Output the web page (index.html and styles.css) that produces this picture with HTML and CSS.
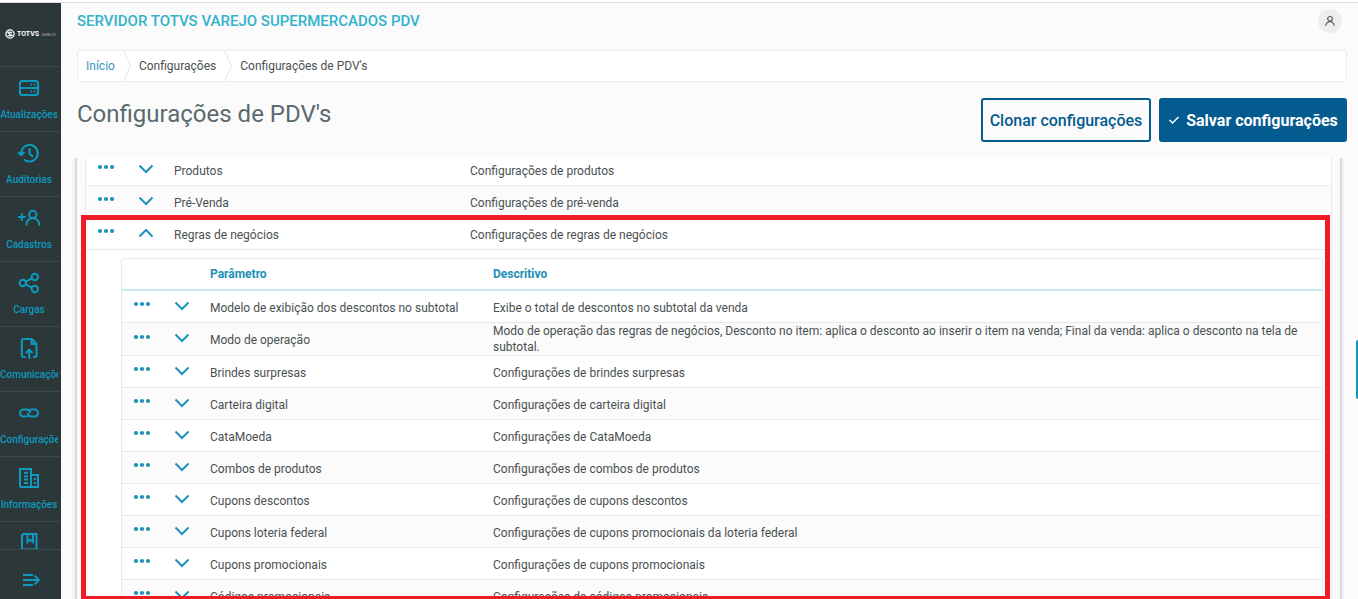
FILE: index.html
```
<!DOCTYPE html>
<html lang="pt-BR">
<head>
<meta charset="utf-8">
<title>Configurações de PDV's</title>
<link rel="stylesheet" href="styles.css">
</head>
<body>
<svg class="sprite" aria-hidden="true">
  <symbol id="dots" viewBox="0 0 18 6"><circle cx="3" cy="3" r="2.1"/><circle cx="9" cy="3" r="2.1"/><circle cx="15" cy="3" r="2.1"/></symbol>
  <symbol id="down" viewBox="0 0 16 10"><path d="M1.5 1.5 8 8l6.500-6.500"/></symbol>
  <symbol id="up" viewBox="0 0 16 10"><path d="M1.500 8.500 8 2l6.500 6.500"/></symbol>
</svg>
<div class="app">
  <aside class="sidebar">
    <div class="brand">
      <svg class="brand-mark" viewBox="0 0 10 10"><circle cx="5" cy="5" r="4.100"/><path d="M2.500 4c1-1.500 3.500-1 4.500 0M3 6c1 1.500 3.500 1 4.500 0M3 3.500l4 3.500"/></svg>
      <span class="brand-name">TOTVS</span><span class="brand-sub">VAREJO</span>
    </div>
    <nav class="menu">
      <a class="menu-item" href="#"><svg viewBox="0 0 24 24"><rect x="2.900" y="5" width="18.200" height="14" rx="2.500"/><path d="M3 12h18M13.500 8.500h1.500M17 8.500h1.500M13.500 15.500h1.500M17 15.500h1.500"/></svg><span>Atualizações</span></a>
      <a class="menu-item" href="#"><svg viewBox="0 0 24 24"><path d="M4.200 13A8.300 8.300 0 1 1 7 18.500M1.200 11.200l3 3 3.200-3M12.500 7v5.500l3.300 3.300"/></svg><span>Auditorias</span></a>
      <a class="menu-item" href="#"><svg viewBox="0 0 24 24"><circle cx="15.800" cy="8.500" r="3.700"/><path d="M9.500 19.500v-1.200a6.300 6.300 0 0 1 12.600 0v1.200M4.900 7.200v7.600M1.100 11h7.600"/></svg><span>Cadastros</span></a>
      <a class="menu-item" href="#"><svg viewBox="0 0 24 24"><circle cx="5.800" cy="12" r="3.200"/><circle cx="17.800" cy="6" r="3.200"/><circle cx="17.800" cy="18" r="3.200"/><path d="m8.700 10.600 6.200-3.100M8.700 13.400l6.200 3.100"/></svg><span>Cargas</span></a>
      <a class="menu-item" href="#"><svg viewBox="0 0 24 24"><path d="M8.500 21H6.800a2 2 0 0 1-2-2V5a2 2 0 0 1 2-2h8l4.700 4.700V19a2 2 0 0 1-2 2h-1.500M14.500 3.500v4.500h4.500M12.200 23v-9M8.900 17l3.300-3.300 3.300 3.300"/></svg><span>Comunicações</span></a>
      <a class="menu-item" href="#"><svg viewBox="0 0 24 24"><path d="M12.500 13.500A3.500 3.500 0 0 1 9.500 15.500H6.500a3.500 3.500 0 0 1 0-7H9.500a3.500 3.500 0 0 1 3.500 3.500M11.500 10.500a3.500 3.500 0 0 1 3-2h3a3.500 3.500 0 0 1 0 7h-3a3.500 3.500 0 0 1-3.500-3.500"/></svg><span>Configurações</span></a>
      <a class="menu-item" href="#"><svg viewBox="0 0 24 24"><path d="M3 21V3h11v18M14 9h7v12H3M7 6.800h4M7 10.200h4M7 13.600h4M7 17h4M17 13h2M17 17h2"/></svg><span>Informações</span></a>
      <a class="menu-item" href="#" aria-label="Documentação"><svg viewBox="0 0 24 24"><path d="M5 18V4.500L6.500 3h13v15.500H5M10.500 3v8l2.700-2.200L16 11V3"/></svg></a>
    </nav>
    <button class="expand" aria-label="Expandir menu"><svg viewBox="0 0 24 24"><path d="M4 7h10M4 12h15M4 17h10M15.500 7.500l4.500 4.500-4.500 4.500"/></svg></button>
  </aside>

  <main class="content">
    <header class="topbar">
      <strong class="product">SERVIDOR TOTVS VAREJO SUPERMERCADOS PDV</strong>
      <button class="avatar" aria-label="Perfil"><svg viewBox="0 0 12 12"><circle cx="6" cy="3.800" r="2.300"/><path d="M1.800 10.800a4.200 4.200 0 0 1 8.400 0"/></svg></button>
    </header>
    <nav class="crumbs" aria-label="Navegação">
      <a href="#">Início</a>
      <svg viewBox="0 0 8 30"><path d="M.5 0 7.500 15 .5 30"/></svg>
      <span>Configurações</span>
      <svg viewBox="0 0 8 30"><path d="M.5 0 7.500 15 .5 30"/></svg>
      <span>Configurações de PDV's</span>
    </nav>
    <div class="heading">
      <h1>Configurações de PDV's</h1>
      <div class="actions">
        <button class="btn">Clonar configurações</button>
        <button class="btn btn-primary"><svg viewBox="0 0 12 10"><path d="m1.500 5 3 3 6-6"/></svg>Salvar configurações</button>
      </div>
    </div>

    <div class="viewport">
      <section class="panel">
        <table class="grid outer">
          <colgroup><col class="c-act"><col class="c-act"><col class="c-name"><col></colgroup>
          <tbody>
            <tr><td><button aria-label="Ações"><svg class="dots"><use href="#dots"/></svg></button></td><td><button aria-label="Expandir"><svg class="chev"><use href="#down"/></svg></button></td><td>Produtos</td><td>Configurações de produtos</td></tr>
            <tr class="alt"><td><button aria-label="Ações"><svg class="dots"><use href="#dots"/></svg></button></td><td><button aria-label="Expandir"><svg class="chev"><use href="#down"/></svg></button></td><td>Pré-Venda</td><td>Configurações de pré-venda</td></tr>
            <tr><td><button aria-label="Ações"><svg class="dots"><use href="#dots"/></svg></button></td><td><button aria-label="Recolher"><svg class="chev"><use href="#up"/></svg></button></td><td>Regras de negócios</td><td>Configurações de regras de negócios</td></tr>
            <tr><td class="detail" colspan="4">
              <table class="grid inner">
                <colgroup><col class="c-act"><col class="c-act"><col class="c-param"><col></colgroup>
                <thead><tr><th></th><th></th><th>Parâmetro</th><th>Descritivo</th></tr></thead>
                <tbody>
                  <tr><td><button aria-label="Ações"><svg class="dots"><use href="#dots"/></svg></button></td><td><button aria-label="Expandir"><svg class="chev"><use href="#down"/></svg></button></td><td>Modelo de exibição dos descontos no subtotal</td><td>Exibe o total de descontos no subtotal da venda</td></tr>
                  <tr class="alt"><td><button aria-label="Ações"><svg class="dots"><use href="#dots"/></svg></button></td><td><button aria-label="Expandir"><svg class="chev"><use href="#down"/></svg></button></td><td>Modo de operação</td><td class="long">Modo de operação das regras de negócios, Desconto no item: aplica o desconto ao inserir o item na venda; Final da venda: aplica o desconto na tela de subtotal.</td></tr>
                  <tr><td><button aria-label="Ações"><svg class="dots"><use href="#dots"/></svg></button></td><td><button aria-label="Expandir"><svg class="chev"><use href="#down"/></svg></button></td><td>Brindes surpresas</td><td>Configurações de brindes surpresas</td></tr>
                  <tr class="alt"><td><button aria-label="Ações"><svg class="dots"><use href="#dots"/></svg></button></td><td><button aria-label="Expandir"><svg class="chev"><use href="#down"/></svg></button></td><td>Carteira digital</td><td>Configurações de carteira digital</td></tr>
                  <tr><td><button aria-label="Ações"><svg class="dots"><use href="#dots"/></svg></button></td><td><button aria-label="Expandir"><svg class="chev"><use href="#down"/></svg></button></td><td>CataMoeda</td><td>Configurações de CataMoeda</td></tr>
                  <tr class="alt"><td><button aria-label="Ações"><svg class="dots"><use href="#dots"/></svg></button></td><td><button aria-label="Expandir"><svg class="chev"><use href="#down"/></svg></button></td><td>Combos de produtos</td><td>Configurações de combos de produtos</td></tr>
                  <tr><td><button aria-label="Ações"><svg class="dots"><use href="#dots"/></svg></button></td><td><button aria-label="Expandir"><svg class="chev"><use href="#down"/></svg></button></td><td>Cupons descontos</td><td>Configurações de cupons descontos</td></tr>
                  <tr class="alt"><td><button aria-label="Ações"><svg class="dots"><use href="#dots"/></svg></button></td><td><button aria-label="Expandir"><svg class="chev"><use href="#down"/></svg></button></td><td>Cupons loteria federal</td><td>Configurações de cupons promocionais da loteria federal</td></tr>
                  <tr><td><button aria-label="Ações"><svg class="dots"><use href="#dots"/></svg></button></td><td><button aria-label="Expandir"><svg class="chev"><use href="#down"/></svg></button></td><td>Cupons promocionais</td><td>Configurações de cupons promocionais</td></tr>
                  <tr class="alt"><td><button aria-label="Ações"><svg class="dots"><use href="#dots"/></svg></button></td><td><button aria-label="Expandir"><svg class="chev"><use href="#down"/></svg></button></td><td>Códigos promocionais</td><td>Configurações de códigos promocionais</td></tr>
                </tbody>
              </table>
            </td></tr>
          </tbody>
        </table>
      </section>
      <div class="highlight"></div>
    </div>
  </main>
  <div class="side-tab"></div>
</div>
</body>
</html>
```
FILE: styles.css
```
* { box-sizing: border-box; }
body { margin: 0; font-family: Roboto, sans-serif; font-size: 12px; color: #4a5052; background: #fbfbfb; }
button { font: inherit; color: inherit; background: none; border: 0; padding: 0; cursor: pointer; }
a { text-decoration: none; color: #3b94bb; }
svg { fill: none; stroke: currentColor; }
.sprite { position: absolute; width: 0; height: 0; }

.app { position: relative; display: flex; height: 100vh; overflow: hidden; padding-top: 2px; }
.app::before { content: ""; position: absolute; top: 0; left: 0; right: 0; height: 2px; background: #fff; border-bottom: 1px solid #dedede; }

.sidebar { flex: 0 0 61px; display: flex; flex-direction: column; background: #2c3739; color: #0c9abe; }
.brand { flex: 0 0 65px; margin-right: 1px; border-bottom: 1px solid #3e494b; display: flex; align-items: center; gap: 2px; padding-left: 5px; color: #fff; }
.brand-mark { width: 10px; height: 10px; stroke-width: 1.3; }
.brand-name { font-size: 7px; font-weight: 700; }
.brand-sub { font-size: 4px; color: #a9afb0; }
.menu { flex: 1; min-height: 0; overflow: hidden; margin-right: 1px; }
.menu-item { display: flex; flex-direction: column; align-items: center; height: 65px; padding-top: 9px; border-bottom: 1px solid #3e494b; color: inherit; font-size: 10px; font-weight: 500; line-height: 12px; }
.menu-item svg { width: 24px; height: 24px; margin-right: 2px; stroke-width: 2; }
.menu-item span { width: 58px; margin: 9px 2px 0 0; overflow: hidden; white-space: nowrap; text-align: center; }
.expand { flex: 0 0 50px; display: grid; place-items: center; padding-top: 10px; border-top: 1px solid #3e494b; }
.expand svg { width: 24px; height: 24px; stroke-width: 1.8; }

.content { flex: 1; min-width: 0; display: flex; flex-direction: column; }
.topbar { display: flex; align-items: center; justify-content: space-between; height: 38px; padding: 0 16px; }
.product { font-size: 15px; font-weight: 500; color: #34b2cb; }
.avatar { width: 24px; height: 24px; border-radius: 50%; background: #eee; color: #565d5f; display: grid; place-items: center; }
.avatar svg { width: 12px; height: 12px; stroke-width: 1.2; }
.crumbs { display: flex; align-items: center; height: 32px; margin: 10px 11px 0 16px; padding-left: 8px; background: #fff; border: 1px solid #ececec; border-radius: 3px; gap: 8px; }
.crumbs svg { width: 8px; height: 30px; stroke: #e6e6e6; }
.heading { display: flex; justify-content: space-between; height: 76px; padding: 16px 11px 0 16px; }
h1 { margin: 0; font-size: 24px; line-height: 32px; font-weight: 400; color: #5a6a6e; }
.actions { display: flex; gap: 8px; }
.btn { width: 170px; height: 44px; border: 2px solid #045b8f; border-radius: 3px; color: #045b8f; font-size: 16px; font-weight: 500; white-space: nowrap; }
.btn-primary { display: flex; align-items: center; justify-content: center; gap: 6px; width: 188px; background: #045b8f; color: #fff; font-weight: 700; }
.btn-primary svg { width: 12px; height: 10px; stroke-width: 1.5; }

.viewport { position: relative; flex: 1; min-height: 0; overflow: hidden; padding: 0 18px 0 16px; }
.panel { margin-top: -4px; padding: 0 8px; background: #fbfbfb; box-shadow: 0 0 5px rgba(0, 0, 0, .35); }
.highlight { position: absolute; inset: 57px 28px -2px 20px; border: 5px solid #ee1c25; }
.side-tab { position: absolute; right: 0; top: 340px; width: 2px; height: 59px; background: #0c9abe; border-radius: 2px 0 0 2px; }

.grid { width: 100%; table-layout: fixed; border-collapse: separate; border-spacing: 0; background: #fff; border: 1px solid #e9e9e9; border-radius: 3px; }
.outer { border-top: 0; }
.c-act { width: 40px; }
.c-name { width: 296px; }
.c-param { width: 283px; }
.grid td { height: 32px; padding: 2px 8px 0; line-height: 16px; text-align: left; vertical-align: middle; border-bottom: 1px solid #e9e9e9; }
.grid td:nth-child(1) { text-align: center; padding: 0 0 6px; }
.grid td:nth-child(2) { text-align: center; padding: 0 0 3px; }
.grid td.long { padding: 0 8px; }
.grid .alt > td { background: #fbfbfb; }
.grid th { height: 32px; padding: 0 8px; text-align: left; color: #1b8fb5; font-weight: 700; border-bottom: 2px solid #cbe9f1; }
.grid button { display: inline-block; vertical-align: middle; color: #1b94bc; }
.dots { display: block; width: 18px; height: 6px; }
.dots use { fill: currentColor; stroke: none; }
.chev { display: block; width: 16px; height: 10px; stroke-width: 2; }
.grid td.detail:nth-child(1) { padding: 8px 8px 0 35px; }
```
